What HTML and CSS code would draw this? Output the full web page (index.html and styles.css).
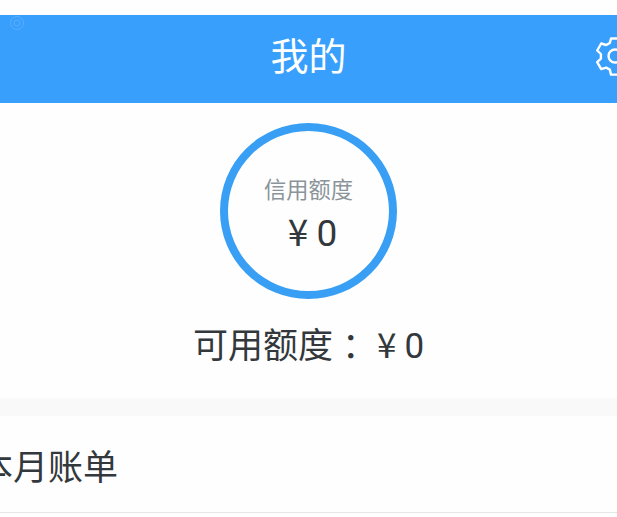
FILE: index.html
```html
<!DOCTYPE html>
<html lang="zh">
<head>
<meta charset="utf-8">
<title>我的</title>
<link rel="stylesheet" href="styles.css">
</head>
<body>
<div class="page">
  <header class="bar">
    <svg class="mark" viewBox="0 0 16 16" aria-hidden="true"><circle cx="8" cy="8" r="6.5"/><circle cx="8" cy="8" r="3"/></svg>
    <h1 class="title">我的</h1>
    <svg class="gear" viewBox="0 0 40 40" aria-hidden="true">
      <path d="M16 2.5h8l1.2 5 3.6 2 5-1.5 4 7-3.7 3.5v4.1l3.7 3.5-4 7-5-1.5-3.6 2-1.2 5h-8l-1.2-5-3.6-2-5 1.5-4-7 3.7-3.5V18l-3.7-3.5 4-7 5 1.5 3.6-2z"/>
      <circle cx="20" cy="20" r="6.5"/>
    </svg>
  </header>
  <section class="credit">
    <div class="ring">
      <div class="ring-label">信用额度</div>
      <div class="ring-value">¥<span class="num">0</span></div>
    </div>
    <div class="available">可用额度<span class="colon">：</span>¥<span class="num">0</span></div>
  </section>
  <div class="band"></div>
  <div class="row"><span class="row-text">本月账单</span></div>
</div>
</body>
</html>
```
FILE: styles.css
```css
* { box-sizing: border-box; }
html, body { margin: 0; height: 100%; overflow: hidden; background: #fff; }
body { font-family: "Noto Sans CJK SC", "Noto Sans", sans-serif; color: #33383c; }
.page { width: 617px; height: 517px; padding-top: 15px; overflow: hidden; background: #fefefe; }
.bar { position: relative; height: 88px; background: #389ffd; display: flex; align-items: center; justify-content: center; }
.title { margin: 0 0 10px; font-size: 38px; font-weight: 400; line-height: 1; color: #fff; }
.mark { position: absolute; left: 9px; top: 0; width: 16px; height: 16px; fill: none; stroke: #58aefd; stroke-width: 1; }
.gear { position: absolute; left: 595px; top: 21px; width: 40px; height: 40px; fill: none; stroke: #fff; stroke-width: 2.4; stroke-linejoin: round; }
.credit { height: 295px; padding-top: 20px; display: flex; flex-direction: column; align-items: center; }
.ring { width: 177px; height: 176px; border: 8px solid #389ff5; border-radius: 50%; display: flex; flex-direction: column; align-items: center; }
.ring-label { margin-top: 41px; font-size: 22.25px; line-height: 32px; color: #8a9499; }
.ring-value { margin-top: 4px; padding-left: 8px; font-size: 37px; line-height: 44px; color: #33383c; }
.num { margin-left: 8px; font-family: "Roboto", sans-serif; }
.available { margin-top: 20px; font-size: 35px; line-height: 48px; color: #33383c; }
.colon { margin-left: 9px; }
.band { height: 18px; background: #f9f9f9; }
.row { height: 97px; margin-left: -22px; width: 639px; padding-top: 23px; font-size: 35px; line-height: 52px; color: #33383c; border-bottom: 1px solid #e6e6e6; }
```
